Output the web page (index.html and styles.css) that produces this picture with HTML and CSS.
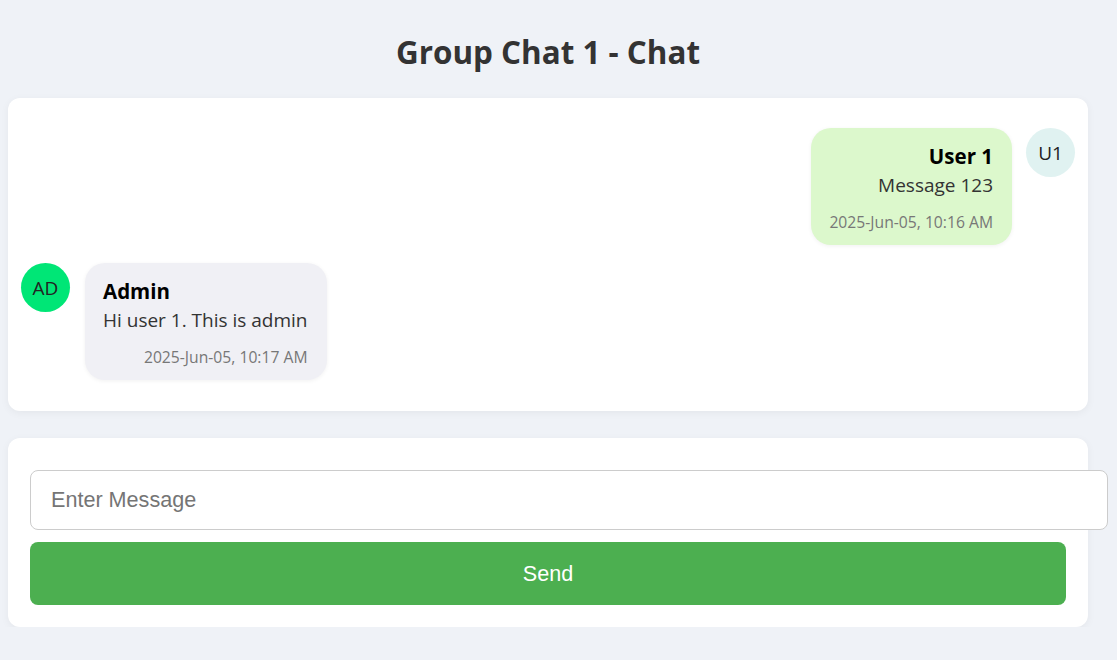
FILE: index.html
```html
<!DOCTYPE html>
<html lang="en">
<head>
<meta charset="utf-8">
<title>Group Chat 1 - Chat</title>
<link rel="stylesheet" href="styles.css">
</head>
<body>
<div class="app">
  <h1 class="title">Group Chat 1 - Chat</h1>
  <section class="chat">
    <div class="msg own">
      <div class="avatar avatar-user">U1</div>
      <div class="bubble bubble-own">
        <div class="name">User 1</div>
        <div class="text">Message 123</div>
        <div class="time">2025-Jun-05, 10:16 AM</div>
      </div>
    </div>
    <div class="msg">
      <div class="avatar avatar-admin">AD</div>
      <div class="bubble bubble-other">
        <div class="name">Admin</div>
        <div class="text">Hi user 1. This is admin</div>
        <div class="time">2025-Jun-05, 10:17 AM</div>
      </div>
    </div>
  </section>
  <form class="composer">
    <input class="input" type="text" placeholder="Enter Message">
    <button class="send" type="button">Send</button>
  </form>
</div>
</body>
</html>
```
FILE: styles.css
```css
html, body {
  margin: 0;
  background: #eff2f7;
}
body {
  padding: 0 8px;
  font-family: "Open Sans", "Noto Sans", sans-serif;
  color: #333;
}
.app {
  max-width: 1080px;
}
.title {
  margin: 0 0 24px;
  padding-top: 30px;
  line-height: 44px;
  font-size: 31.4px;
  font-weight: 700;
  text-align: center;
  color: #333;
}
.chat {
  background: #fff;
  border-radius: 12px;
  box-shadow: 0 2px 8px rgba(0, 0, 0, 0.05);
  padding: 30px 13px 31px;
  display: flex;
  flex-direction: column;
  gap: 18px;
}
.msg {
  display: flex;
  align-items: flex-start;
  gap: 15px;
}
.msg.own {
  flex-direction: row-reverse;
  gap: 14px;
}
.avatar {
  width: 49px;
  height: 49px;
  border-radius: 50%;
  display: flex;
  align-items: center;
  justify-content: center;
  font-size: 19px;
  color: #222;
  flex: none;
}
.avatar-user { background: #e0f2f1; }
.avatar-admin { background: #00e676; }
.bubble {
  padding: 14px 19px 14px 18px;
  border-radius: 20px;
  box-shadow: 0 1px 4px rgba(0, 0, 0, 0.06);
}
.bubble-own {
  background: #dcf8cc;
  text-align: right;
}
.bubble-other {
  background: #f0f0f5;
}
.name {
  font-size: 20.5px;
  font-weight: 700;
  line-height: 28px;
  color: #000;
}
.text {
  font-size: 19px;
  line-height: 30px;
  color: #333;
}
.time {
  margin-top: 13px;
  font-size: 15.7px;
  line-height: 18px;
  color: #777;
  text-align: right;
}
.composer {
  margin-top: 27px;
  background: #fff;
  border-radius: 12px;
  box-shadow: 0 2px 8px rgba(0, 0, 0, 0.05);
  padding: 32px 22px 22px;
  display: flex;
  flex-direction: column;
  align-items: flex-start;
  gap: 12px;
}
.input {
  width: 100%;
  height: 58px;
  padding: 0 20px;
  border: 1px solid #ccc;
  border-radius: 8px;
  font-family: "Liberation Sans", Arial, sans-serif;
  font-size: 21.6px;
  color: #333;
  background: #fff;
  outline: none;
}
.input::placeholder {
  color: #757575;
}
.send {
  width: 100%;
  height: 63px;
  border: none;
  border-radius: 8px;
  background: #4caf50;
  color: #fff;
  font-family: "Liberation Sans", Arial, sans-serif;
  font-size: 21.6px;
  cursor: pointer;
}
```
